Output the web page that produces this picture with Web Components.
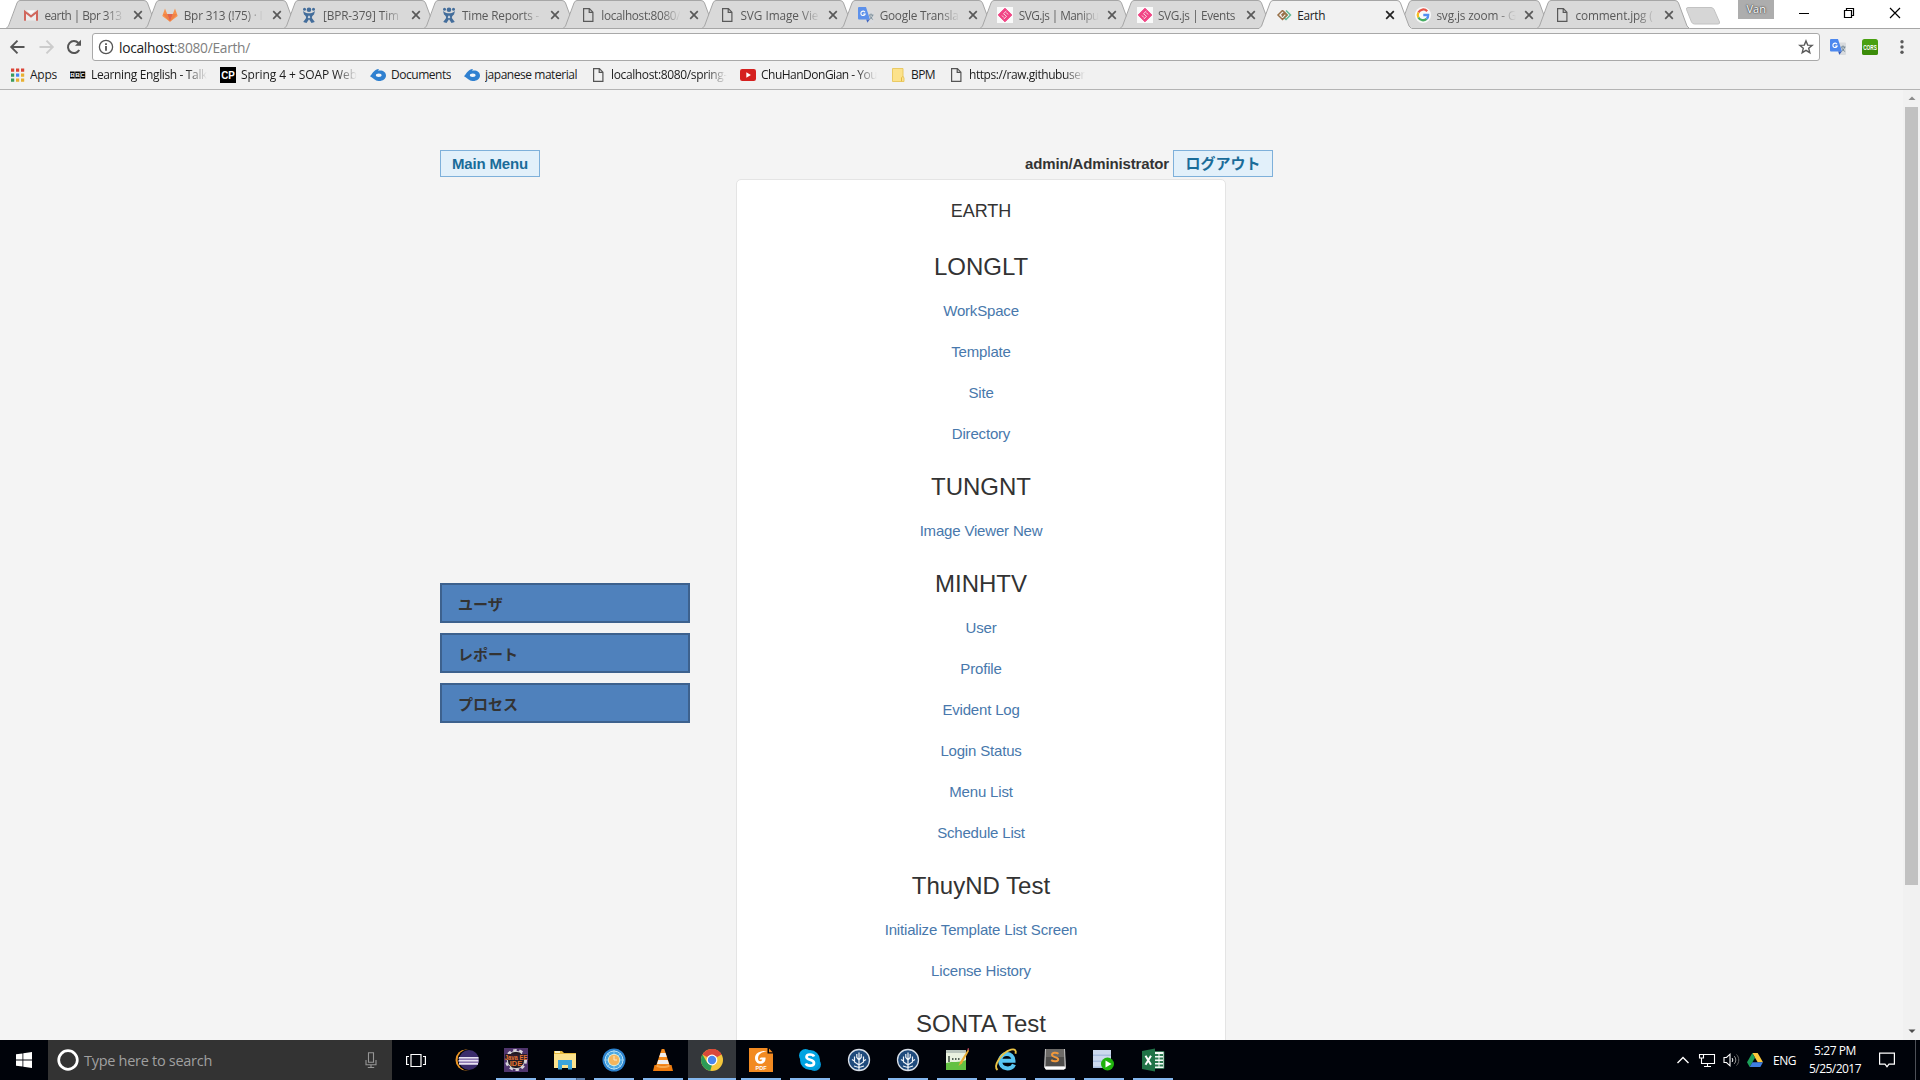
<!DOCTYPE html>
<html lang="en">
<head>
<meta charset="utf-8">
<title>Earth</title>
<style>
html,body{margin:0;height:100%;overflow:hidden}
body{font-family:"Open Sans","Noto Sans","Noto Sans CJK JP",sans-serif}
</style>
</head>
<body>
<desktop-screen></desktop-screen>
<script>
const ICONS = {
gmail:'<path d="M1 3.500h14v10H1z" fill="#f0efef"/><path d="M2 13.700V4.700l6 4.700 6-4.700v9" fill="none" stroke="#d0584d" stroke-width="2"/><path d="M3 3.500l5 4 5-4" fill="#fff" stroke="#dcdcdc" stroke-width=".6"/>',
gitlab:'<path d="M8 14.8L.3 9 3 1.5 5.2 7h5.6L13 1.5 15.7 9z" fill="#fc8a3a"/><path d="M8 14.8L5.2 7h5.6z" fill="#e2553a"/><path d="M8 14.8L.8 7h4.4zM8 14.8L15.2 7h-4.4z" fill="#f47534"/>',
jira:'<g fill="#2f5f93"><circle cx="8" cy="2.800" r="2.300"/><circle cx="3.500" cy="2.300" r="1.500"/><circle cx="12.500" cy="2.300" r="1.500"/><path d="M2 4C4.500 6 6.300 6.300 8 6.300s3.500-.3 6-2.300l-1 3.500c-1.200 1-2.300 2-2.100 3.400l2.900 4-3.300 1L8 12.300 5.500 15.900l-3.300-1 2.900-4C5.300 9.500 4.200 8.500 3 7.500z"/></g><path d="M8 8.300l1.300 1.900L8 11.600l-1.300-1.400z" fill="#dbe3ea"/>',
page:'<path d="M3.600 1.600h5.800l3.500 3.600v9.200H3.600zM9.200 1.600v3.800h3.700" fill="none" stroke="currentColor" stroke-width="1.200"/>',
gtrans:'<path d="M6 3.500h9a1 1 0 0 1 1 1V15a1 1 0 0 1-1 1H9z" fill="#d9dbde"/><path d="M1 0h7l4 12.500H1a1 1 0 0 1-1-1V1a1 1 0 0 1 1-1z" fill="#4d88ee"/><path d="M8.200 12.500h3.500L9.400 15.800z" fill="#3059bd"/><path d="M11 8h4.500M13 6.500V8M14.600 8c-.5 2.500-2 4-3.200 4.700M11.700 8.500c.7 2 2 3.300 3.400 4" stroke="#6b8190" fill="none" stroke-width=".9"/><path d="M7 5.200A2.200 2.200 0 1 0 7.200 7H5.200" stroke="#fff" fill="none" stroke-width="1.100"/>',
svgjs:'<path d="M0 0h16v16H0z" fill="#fff"/><path d="M8 1.200L14.800 8 8 14.800 1.200 8z" fill="#f53079" stroke="#f53079"/><path d="M9.300 4L6.500 6.700l3 2.600-2.700 2.800M5 8.500l1.800 2M9.300 5.500l1.700 2" stroke="#fff" fill="none" stroke-width=".8"/>',
earth:'<g fill="none" stroke-width="1.500"><path d="M10 3.500L14.500 8 10 12.500l-2-1.800" stroke="#62b996"/><path d="M8.500 5.500L11 8l-2.500 2.500" stroke="#7abf73"/><path d="M6.500 3.500L2 8l4.500 4.500L11 8 9 6 6 9.500M6.500 3.500l2 1.800-3 3" stroke="#987047"/></g>',
google:'<circle cx="8" cy="8" r="8" fill="#fff"/><g fill="none" stroke-width="2.300"><path d="M12.200 4.300A5.300 5.300 0 0 0 3.400 5.500" stroke="#ea4335"/><path d="M3.400 5.500a5.300 5.300 0 0 0 0 5" stroke="#fbbc05"/><path d="M3.400 10.500a5.300 5.300 0 0 0 8.200 1.400" stroke="#34a853"/><path d="M11.600 11.900A5 5 0 0 0 13.200 8H8.300" stroke="#4285f4"/></g>',
close:'<path d="M4.200 4.200l7.600 7.600M11.800 4.200l-7.600 7.600" stroke="currentColor" stroke-width="1.700"/>',
back:'<path d="M15.500 8H2.500M8.500 1.700L2.200 8l6.300 6.300" fill="none" stroke="currentColor" stroke-width="1.900"/>',
fwd:'<path d="M.5 8h13M7.500 1.700L13.800 8l-6.300 6.300" fill="none" stroke="currentColor" stroke-width="1.900"/>',
reload:'<path d="M13.200 11A6 6 0 1 1 12.400 4" fill="none" stroke="currentColor" stroke-width="2"/><path d="M15 .8v6H9z" fill="currentColor"/>',
info:'<circle cx="8" cy="8" r="6.600" fill="none" stroke="#555" stroke-width="1.300"/><path d="M7.100 7h1.800v4.800H7.100zM7.100 4.200h1.800V6H7.100z" fill="#555"/>',
star:'<path d="M8 1.900l1.700 4.200 4.500.3-3.500 2.900 1.100 4.400L8 11.300l-3.800 2.400 1.100-4.400L1.800 6.400l4.500-.3z" fill="none" stroke="#5a5a5a" stroke-width="1.400"/>',
cors:'<rect width="16" height="16" rx="2.500" fill="#49a010"/><rect y="8" width="16" height="8" rx="2" fill="#3b8c09"/><text transform="translate(8 10.800) scale(.63 1)" font-size="7.500" font-weight="700" text-anchor="middle" fill="#fff" font-family="Liberation Sans">CORS</text>',
dots:'<g fill="#5a5a5a"><circle cx="8" cy="2.800" r="1.700"/><circle cx="8" cy="8" r="1.700"/><circle cx="8" cy="13.200" r="1.700"/></g>',
apps:'<path d="M2 1.500h3.200v3.200H2zM7 1.500h3.200v3.200H7zM12 1.500h3.200v3.200H12z" fill="#db4437"/><path d="M2 6.500h3.200v3.200H2zM2 11.500h3.200v3.200H2z" fill="#3a9b5c"/><path d="M7 6.500h3.200v3.200H7z" fill="#4285f4"/><path d="M12 6.500h3.200v3.200H12zM7 11.500h3.200v3.200H7zM12 11.500h3.200v3.200H12z" fill="#e8b031"/>',
bbc:'<path d="M0 4.500h4.700v7H0zM5.200 4.500h4.700v7H5.200zM10.400 4.500h4.800v7h-4.800z" fill="#000"/><g font-size="6" font-weight="700" fill="#fff" font-family="Liberation Sans"><text x="0.300" y="10.200">B</text><text x="5.500" y="10.200">B</text><text x="10.600" y="10.200">C</text></g>',
cp:'<path d="M0 0h16v16H0z"/><text transform="translate(8 12) scale(.85 1)" font-size="11.500" font-weight="700" text-anchor="middle" fill="#fff" font-family="Liberation Sans">CP</text>',
docs:'<path d="M0 9.200C2.500 7 3.500 2.500 9 2L8 3.700C12.500 2.800 16 5 16 8.500s-3.500 5.800-7.500 5.500C5 13.700 3.500 11 0 9.200z" fill="#2f80d0"/><ellipse cx="8.800" cy="8.300" rx="2.900" ry="1.700" fill="#f3f6fa"/>',
youtube:'<rect y="2" width="16" height="12" rx="2.200" fill="#d5201f"/><path d="M6.300 5.200l4.600 2.800-4.600 2.800z" fill="#fff"/>',
folder:'<path d="M2.500 1.500h10.500v8.500l1 .6v3.900H2.500z" fill="#fce28b" stroke="#e9c659" stroke-width=".9"/><path d="M11.500 14.300v-3.500l1.500-1.500" fill="none" stroke="#e3ba44"/>',
win:'<path d="M0 2.300L6.500 1.400v6.200H0zM7.300 1.300L16 0v7.600H7.300zM0 8.400h6.500v6.200L0 13.700zM7.300 8.400H16V16l-8.700-1.300z" fill="#fff"/>',
cortana:'<circle cx="11" cy="11" r="9.300" fill="none" stroke="#fff" stroke-width="2.700"/>',
mic:'<path d="M5.500.8h5v9.400h-5zM3 8v4.700h10V8M8 12.700V15.500M4.800 15.500h6.400" fill="none" stroke="#969696" stroke-width="1.100"/>',
taskview:'<path d="M5 1.500h10v12H5zM3 3.500H.6v8H3M17 3.500h2.400v8H17" fill="none" stroke="#fff" stroke-width="1.200"/>',
eclipse:'<circle cx="11" cy="12" r="10.500" fill="#ec9625"/><circle cx="13" cy="12" r="10.500" fill="#00030a"/><circle cx="14" cy="12" r="10" fill="#3b2c6c"/><path d="M4 9h19.500v1.800H3.500zM3.500 12h20v1.800h-20zM4 15h19v1.800H4z" fill="#e8e1f2"/><path d="M4 10.800h19.500V12H4zM4 13.800h19.500V15H4z" fill="#8e79b3"/>',
javaee:'<path d="M0 0h24v24H0z" fill="#4f356d"/><circle cx="12" cy="12" r="9.800" fill="none" stroke="#d8d4dc" stroke-width="2.500" stroke-dasharray="3.500 2.650"/><circle cx="12" cy="12" r="8.700" fill="#211b22" stroke="#ddd"/><path d="M1 6h22v6H1z" fill="#2a1d2a"/><text transform="translate(12 11.600) scale(.76 1)" font-size="7.800" font-weight="700" text-anchor="middle" fill="#e67632" font-family="Liberation Sans">Java EE</text><text x="12" y="18.300" font-size="7.500" font-weight="700" text-anchor="middle" fill="#e67632" font-family="Liberation Sans">IDE</text>',
explorer:'<path d="M1 3h8l2 2h12v4H1z" fill="#e5b93e"/><path d="M2 3h5v2H2z" fill="#f9f0c1"/><path d="M1 6h22v14H1z" fill="#fbe28d"/><path d="M5 12h14v9.500h-4V17H9v4.500H5z" fill="#3ba4dc"/>',
clock:'<circle cx="12" cy="12" r="11.500" fill="#2c82cd"/><circle cx="12" cy="12" r="9" fill="#4aa7e3" stroke="#b8e2f7"/><path d="M12 2v20M2 12h20M5 5l14 14M19 5L5 19" stroke="#9fd6f3" stroke-width=".8"/><circle cx="12" cy="12" r="5.700" fill="#f4b55d" stroke="#dbecd8"/><path d="M12 8v4h3" fill="none" stroke="#fbe9c8" stroke-width="1"/>',
vlc:'<path d="M10.700 1h2.600l6 18H4.700z" fill="#f58a1d"/><path d="M9.500 5h5l1.300 4H8.200zM7.300 12h9.400l1.300 4H6z" fill="#eee"/><path d="M3.500 17h17L22 23H2z" fill="#ee7c0f"/><path d="M6 16.500c3 2 9 2 12 0l.7 2c-3 2-10.400 2-13.400 0z" fill="#f8a74a"/>',
chrome:'<circle cx="12" cy="12" r="11" fill="#f3c63c"/><path d="M12 12L2.500 6.500A11 11 0 0 1 21.500 6.500z" fill="#d9483b"/><path d="M12 6.500h9.500A11 11 0 0 0 12 1z" fill="#d9483b"/><path d="M2.500 6.500L7.200 14.700 12 17l-1.800 5.900A11 11 0 0 1 2.500 6.500z" fill="#2c9b57"/><circle cx="12" cy="12" r="5.400" fill="#fff"/><circle cx="12" cy="12" r="4.200" fill="#4a86ec"/>',
foxit:'<path d="M0 0h18.500v5.500H24V24H0z" fill="#f28a21"/><path d="M20 .5v3.700h3.700z" fill="#f28a21"/><path d="M18 3C11 2.500 6 5 6 10c0 3.500 2.500 5.800 5.500 5.800 3.700 0 5.500-2.800 5-6.300h-4.300c-1 .2-1.600 1-1.700 2h2.800c-.3 1.200-1 1.700-2 1.700-1.500 0-2.300-1.200-2.300-3C9 6.500 13 4 18 3z" fill="#fff"/><text x="12" y="22.300" font-size="5.500" font-weight="700" text-anchor="middle" fill="#fff" font-family="Liberation Sans">PDF</text>',
skype:'<circle cx="7.500" cy="7.500" r="6.500" fill="#00a5e3"/><circle cx="16.500" cy="16.500" r="6.500" fill="#0096d6"/><circle cx="12" cy="12" r="10" fill="#00a3e1"/><path d="M16 8.500C15 6 8.500 5.500 8.500 9c0 3.500 7.500 2 7.500 6 0 3.500-7 3.500-8.200.5" fill="none" stroke="#fff" stroke-width="2.700"/>',
sourcetree:'<circle cx="12" cy="12" r="10.500" fill="#1e4a7c" stroke="#d8dfe8" stroke-width="1.300"/><g fill="none" stroke="#eef3f8" stroke-width="1.200"><path d="M12 22V4.500M12 17l-4.500-3V8.500M12 17l4.500-3V8.500M12 12L9.800 9.500V6M12 12l2.200-2.500V6M7.500 13L5 11.500M16.500 13l2.500-1.500M12 19.500L7 18M12 19.500l5-1.500"/></g>',
npp:'<path d="M1 2h20v20H1z" fill="#e9f2e0"/><path d="M1 2h20v3H1z" fill="#bac6bd"/><path d="M1 15c7-2 13 0 20-3v10H1z" fill="#63c143"/><path d="M4 8v6" stroke="#24342a" stroke-width="1.300"/><path d="M7 11h1.500M10 11h1.500M13 11h1.500" stroke="#24342a" stroke-width="1.500"/><path d="M23.500.5L15 14l-1.500 4 3.500-2.500L24 3z" fill="#e7ad35"/><path d="M22 1l2-1v3z" fill="#b13f54"/>',
ie:'<path d="M20 16.500C18 22 6.500 22.500 6 12.500 6.500 4 19.500 3.500 19.500 12.800H8" fill="none" stroke="#58c5f1" stroke-width="4"/><path d="M3.500 22C-1 18 7 5 17 1.700c4-1.200 5.500 1 4.500 4" fill="none" stroke="#eac345" stroke-width="1.900"/>',
sublime:'<path d="M2 1h20l1 18-2 3H3l-2-3z" fill="#bdbdbd"/><path d="M3 1h18l.5 17h-19z" fill="#4e4d4b"/><path d="M3 1h18v8H3z" fill="#6c6a67"/><path d="M1.500 19h21v2H2.500z" fill="#fff"/><path d="M15.500 5.800C13 4 8.700 4.500 9 7.200c.3 2.300 6 1.500 6.200 4 .2 2.700-4.700 2.700-7 .9" fill="none" stroke="#f0983b" stroke-width="2"/>',
db:'<path d="M1 2h18v18H1z" fill="#a9bedf"/><path d="M1 2h18v4.500H1zM1 8h18v4.500H1zM1 14h18v4.500H1z" fill="#ccd9ee"/><circle cx="15.500" cy="16" r="6.500" fill="#1fb30d"/><path d="M13.500 12.500l6 3.500-6 3.500z" fill="#fff"/>',
excel:'<path d="M12 3.500h11v17H12z" fill="#f5faf6" stroke="#24714a" stroke-width=".8"/><path d="M14 6h3.500v2H14zM18.500 6H22v2h-3.500zM14 9.500h3.500v2H14zM18.500 9.500H22v2h-3.500zM14 13h3.500v2H14zM18.500 13H22v2h-3.500zM14 16.500h3.500v2H14zM18.500 16.500H22v2h-3.500z" fill="#2c7b52"/><path d="M1 3l13-2.500v23L1 21z" fill="#207347"/><path d="M4.500 7.700l5.500 9M10 7.700l-5.500 9" stroke="#fff" stroke-width="2"/>',
caret:'<path d="M2.500 11L8 5.500l5.500 5.500" fill="none" stroke="#fff" stroke-width="1.400"/>',
net:'<path d="M4.500 2.500h11v9H2.500V7M5 14.500h7M8.500 11.500v3M.5 2.500h4V6h-4zM2.500 6v2" fill="none" stroke="#fff" stroke-width="1.100"/>',
vol:'<path d="M1 5.500h2.500L7 2.200v11.600L3.500 10.500H1z" fill="none" stroke="#fff" stroke-width="1.100"/><path d="M9 6c1 1 1 3 0 4" fill="none" stroke="#fff"/><path d="M11.300 4.200c2 2 2 5.600 0 7.600" fill="none" stroke="#999"/><path d="M13.500 2.500c3 3 3 8 0 11" fill="none" stroke="#666"/>',
drive:'<path d="M5.300 1h5.400L16 10.300h-5.300z" fill="#fbc93d"/><path d="M5.300 1L8 5.700 2.700 15 0 10.300z" fill="#1c9f59"/><path d="M5.400 10.300H16L13.300 15H2.700z" fill="#3f7de0"/>',
note:'<path d="M.6 1.200h14.800v11H10l-2 2.500-2-2.500H.6z" fill="none" stroke="#fff" stroke-width="1.200"/>',
min:'<path d="M3 8.500h10" stroke="#000"/>',
restore:'<path d="M3.500 5.500h7v7h-7zM5.500 5.500v-2h7v7h-2" fill="none" stroke="#000" stroke-width="1.200"/>',
wclose:'<path d="M3 3l10 10M13 3L3 13" stroke="#000" stroke-width="1.200"/>',
up:'<path d="M4.500 10L8 6.500l3.500 3.500z" fill="#8b8b8b"/>',
down:'<path d="M4.500 6.500L8 10l3.500-3.500z" fill="#4d4d4d"/>'
};
const BOX = {cortana:'0 0 22 22', taskview:'0 0 20 15'};
for (const n of ['eclipse','javaee','explorer','clock','vlc','chrome','foxit','skype','sourcetree','npp','ie','sublime','db','excel']) BOX[n] = '0 0 24 24';

function define(name, html, init) {
  customElements.define(name, class extends HTMLElement {
    connectedCallback() {
      if (this.shadowRoot) return;
      const root = this.attachShadow({mode: 'open'});
      root.innerHTML = typeof html === 'function' ? html(this) : html;
      if (init) init(this, root);
    }
  });
}

define('app-icon', el => {
  const n = el.getAttribute('name'), box = BOX[n] || '0 0 16 16';
  const [, , w, h] = box.split(' ');
  return `<style>:host{display:block;flex:none;width:${w}px;height:${h}px}svg{display:block;overflow:visible}</style>
  <svg width="${w}" height="${h}" viewBox="${box}">${ICONS[n]}</svg>`;
});

// Text set to a given width by spreading the difference over its letters.
define('fit-text', '<style>:host{display:block;white-space:pre}span{display:inline-block}</style><span><slot></slot></span>', (el, root) => {
  const w = +el.getAttribute('w'), s = root.querySelector('span');
  if (!w) return;
  const d = (w - s.getBoundingClientRect().width) / el.textContent.length;
  s.style.letterSpacing = d.toFixed(3) + 'px';
});

define('browser-tab', el => {
  const on = el.hasAttribute('active');
  return `<style>
  :host{display:grid;flex:none;width:139.2px;height:29px;position:relative;z-index:${on ? 2 : 1};color:${on ? '#222' : '#484848'}}
  :host>*{grid-area:1/1}
  svg{width:153px;height:29px;display:block}
  .row{display:flex;align-items:center;padding:2px 0 0 17px;height:25px;opacity:${on ? 1 : .88}}
  .label{width:80px;margin-left:5.500px;overflow:hidden;font-size:11.800px;line-height:20px;${el.hasAttribute('fade') ? '-webkit-mask-image:linear-gradient(90deg,#000 76%,transparent)' : ''}}
  .x{margin-left:5px;margin-top:1px}
  </style>
  <svg viewBox="0 0 153 29"><path d="M0 28.500L3 26 11 3Q12 .5 14 .5H138Q140.500 .5 141.500 3L150 26 153 28.500V29H0z" fill="${on ? '#f1f1f1' : '#d9d9d9'}"/><path d="M0 28.500L2.500 26 11 3Q12 .5 14 .5H138Q140.500 .5 141.500 3L150 26 152.500 28.500${on ? '' : 'H0'}" fill="none" stroke="#a6a6a6"/></svg>
  <div class="row"><app-icon name="${el.getAttribute('icon')}"></app-icon><div class="label"><fit-text w="${el.getAttribute('w')}">${el.textContent}</fit-text></div><app-icon class="x" name="close"></app-icon></div>`;
});

define('tab-strip', `<style>
:host{display:flex;height:29px;background:linear-gradient(#fff 28px,#a6a6a6 28px);padding-left:6px;box-sizing:border-box}
.new{display:block;flex:none;margin:6px 0 0 9px}
.user{margin-left:17px;width:36px;height:19px;background:#adadad;color:#fff;font-size:11px;line-height:17px;text-align:center;text-shadow:0 0 2px #333,0 0 1px #333}
.b{margin-top:5px}
</style>
<browser-tab icon="gmail" w="77" fade>earth | Bpr 313</browser-tab>
<browser-tab icon="gitlab" w="79" fade>Bpr 313 (!75) · I</browser-tab>
<browser-tab icon="jira" w="76" fade>[BPR-379] Tim</browser-tab>
<browser-tab icon="jira" w="77" fade>Time Reports -</browser-tab>
<browser-tab icon="page" w="79" fade>localhost:8080/</browser-tab>
<browser-tab icon="page" w="78" fade>SVG Image Vie</browser-tab>
<browser-tab icon="gtrans" w="79" fade>Google Transla</browser-tab>
<browser-tab icon="svgjs" w="80" fade>SVG.js | Manipu</browser-tab>
<browser-tab icon="svgjs" w="77">SVG.js | Events</browser-tab>
<browser-tab icon="earth" w="28" active>Earth</browser-tab>
<browser-tab icon="google" w="80" fade>svg.js zoom - G</browser-tab>
<browser-tab icon="page" w="77" fade>comment.jpg (</browser-tab>
<svg class="new" width="36" height="19"><path d="M3 1.500H26Q28 1.500 29 3.500L34.500 16Q35 18 33 18H9.500Q7.500 18 6.500 16L1.500 3.500Q1 1.500 3 1.500z" fill="#d6d6d6" stroke="#c2c2c2"/></svg>
<div class="user">Van</div>
<app-icon class="b" name="min" style="margin-left:22px"></app-icon>
<app-icon class="b" name="restore" style="margin-left:29px"></app-icon>
<app-icon class="b" name="wclose" style="margin-left:30px"></app-icon>`);

define('tool-bar', `<style>
:host{display:flex;align-items:center;height:36px;padding:0;background:#f1f1f1;color:#555}
.omni{display:flex;align-items:center;box-sizing:border-box;width:1728px;height:28px;margin-left:10px;border:1px solid #a9a9a9;border-radius:3px;background:#fff;padding:0 5px}
.url{display:flex;font-size:13.800px;color:#808080;margin-left:5px}
.url b{font-weight:400;color:#222}
.grow{flex:1}
</style>
<app-icon name="back" style="margin-left:9px"></app-icon>
<app-icon name="fwd" style="margin-left:14px;color:#ccc"></app-icon>
<app-icon name="reload" style="margin-left:11px"></app-icon>
<div class="omni"><app-icon name="info"></app-icon><fit-text class="url" w="131"><b>localhost</b>:8080/Earth/</fit-text><div class="grow"></div><app-icon name="star"></app-icon></div>
<app-icon name="gtrans" style="margin-left:10px"></app-icon>
<app-icon name="cors" style="margin-left:16px"></app-icon>
<app-icon name="dots" style="margin-left:16px"></app-icon>`);

define('book-mark', el => `<style>
:host{display:flex;align-items:center;flex:none;gap:5px;height:20px;color:#1c1c1c}
app-icon{color:#555}
div{width:${el.getAttribute('w')}px;overflow:hidden;font-size:12px;line-height:20px;white-space:nowrap;${el.hasAttribute('fade') ? '-webkit-mask-image:linear-gradient(90deg,#000 82%,transparent)' : ''}}
</style><app-icon name="${el.getAttribute('icon')}"></app-icon><div><fit-text w="${el.getAttribute('w')}">${el.textContent}</fit-text></div>`);

define('bookmark-bar', `<style>:host{display:flex;gap:13px;box-sizing:border-box;height:25px;padding-left:9px;background:#f1f1f1;border-bottom:1px solid #b4b4b4}</style>
<book-mark icon="apps" w="27">Apps</book-mark>
<book-mark icon="bbc" w="116" fade>Learning English - Talk</book-mark>
<book-mark icon="cp" w="116" fade>Spring 4 + SOAP Web</book-mark>
<book-mark icon="docs" w="60">Documents</book-mark>
<book-mark icon="docs" w="92">japanese material</book-mark>
<book-mark icon="page" w="116" fade>localhost:8080/spring-</book-mark>
<book-mark icon="youtube" w="116" fade>ChuHanDonGian - You</book-mark>
<book-mark icon="folder" w="24">BPM</book-mark>
<book-mark icon="page" w="116" fade>https://raw.githubuser</book-mark>`);

define('action-button', `<style>:host{display:flex;justify-content:center;box-sizing:border-box;width:100px;height:27px;border:1px solid #7eb0da;background:#e2f0fa;color:#1a6c99;font-weight:700;font-size:15px;line-height:26px}</style><slot></slot>`);

define('side-item', `<style>:host{display:block;box-sizing:border-box;width:250px;height:40px;border:2px solid #3d618d;background:#4f81bc;color:#333;font-weight:700;font-size:15px;line-height:39px;padding-left:16px}</style><slot></slot>`);

define('link-group', el => `<style>
:host{display:block;text-align:center}
h3{margin:0;padding-top:9px;font-size:24px;font-weight:400;line-height:47px;height:47px;color:#333}
a{display:block;font-size:15px;line-height:41px;height:41px;color:#4878ac;letter-spacing:-.18px}
</style><h3>${el.getAttribute('title-text')}</h3>${(el.getAttribute('links') || '').split('|').filter(Boolean).map(t => `<a>${t}</a>`).join('')}`);

define('earth-page', `<style>
:host{display:flex;height:950px;overflow:hidden;background:#f4f4f4;font-family:"Liberation Sans","Noto Sans CJK JP",sans-serif;color:#333}
.main{flex:1;padding:60px 0 0 440px}
.top{display:flex;width:833px;height:27px;align-items:center;margin-bottom:2px}
.name{margin-left:auto;font-weight:700;font-size:15px;margin-right:4px}
.cols{display:flex}
.side{display:flex;flex-direction:column;gap:10px;width:296px;padding-top:404px}
.card{box-sizing:border-box;width:490px;height:1100px;border:1px solid #e4e4e4;border-radius:5px;background:#fff}
.card h4{margin:0;height:54px;padding-top:11px;font-size:18px;line-height:40px;box-sizing:border-box;font-weight:400;text-align:center}
.bar{display:flex;flex-direction:column;align-items:center;width:17px;background:#f1f1f1}
.thumb{width:13px;height:778px;background:#c1c1c1}
.bar app-icon{height:17px}
.sp{flex:1}
</style>
<div class="main">
<div class="top"><action-button><fit-text w="76">Main Menu</fit-text></action-button><fit-text class="name" w="144">admin/Administrator</fit-text><action-button><fit-text w="75">ログアウト</fit-text></action-button></div>
<div class="cols">
<div class="side"><side-item>ユーザ</side-item><side-item>レポート</side-item><side-item>プロセス</side-item></div>
<div class="card"><h4>EARTH</h4>
<link-group title-text="LONGLT" links="WorkSpace|Template|Site|Directory"></link-group>
<link-group title-text="TUNGNT" links="Image Viewer New"></link-group>
<link-group title-text="MINHTV" links="User|Profile|Evident Log|Login Status|Menu List|Schedule List"></link-group>
<link-group title-text="ThuyND Test" links="Initialize Template List Screen|License History"></link-group>
<link-group title-text="SONTA Test"></link-group>
</div></div></div>
<div class="bar"><app-icon name="up"></app-icon><div class="thumb"></div><div class="sp"></div><app-icon name="down"></app-icon></div>`);

define('task-item', el => `<style>
:host{display:flex;flex-direction:column;align-items:center;flex:none;width:49px;height:40px}
.i{display:flex;justify-content:center;align-items:center;width:48px;height:38px;padding-top:2px;box-sizing:border-box}
.u{width:40px;height:2px}
:host([run]) .u{background:#84b7ee}
:host([many]) .u{background:linear-gradient(90deg,#84b7ee 31px,#2c4766 31px,#587ca8 32px)}
:host([on]) .i{background:#34373b}:host([on]) .u{width:48px;background:#84b7ee}
</style><div class="i"><app-icon name="${el.getAttribute('icon')}"></app-icon></div><div class="u"></div>`);

define('task-bar', `<style>
:host{display:flex;align-items:center;height:40px;background:#00030a;color:#fff}
.search{display:flex;align-items:center;width:344px;height:40px;margin-left:16px;background:#333;color:#a0a0a0;font-size:14.500px}
.clock{display:flex;flex-direction:column;align-items:center;width:54px;font-size:12px;line-height:18px}
.end{width:1px;height:40px;background:#4d5057;margin-left:20px;margin-right:4px}
.grow{flex:1}
</style>
<app-icon name="win" style="margin-left:16px"></app-icon>
<div class="search"><app-icon name="cortana" style="margin-left:9px"></app-icon><fit-text w="128" style="margin-left:5px">Type here to search</fit-text><div class="grow"></div><app-icon name="mic" style="margin-right:13px"></app-icon></div>
<app-icon name="taskview" style="margin:0 7px 0 14px"></app-icon>
<task-item icon="eclipse" style="margin-left:9px"></task-item><task-item icon="javaee" run></task-item><task-item icon="explorer" run many></task-item><task-item icon="clock" run></task-item><task-item icon="vlc" run></task-item><task-item icon="chrome" on></task-item><task-item icon="foxit" run></task-item><task-item icon="skype" run></task-item><task-item icon="sourcetree"></task-item><task-item icon="sourcetree" run></task-item><task-item icon="npp" run></task-item><task-item icon="ie" run></task-item><task-item icon="sublime" run></task-item><task-item icon="db" run></task-item><task-item icon="excel" run></task-item>
<div class="grow"></div>
<app-icon name="caret"></app-icon><app-icon name="net" style="margin-left:8px"></app-icon><app-icon name="vol" style="margin-left:8px"></app-icon><app-icon name="drive" style="margin-left:8px"></app-icon>
<fit-text w="23" style="margin-left:10px;font-size:12px">ENG</fit-text>
<div class="clock" style="margin-left:12px"><fit-text w="42">5:27 PM</fit-text><fit-text w="52">5/25/2017</fit-text></div>
<app-icon name="note" style="margin-left:17px"></app-icon><div class="end"></div>`);

define('desktop-screen', `<style>:host{display:flex;flex-direction:column;width:1920px;height:1080px;overflow:hidden}:host>*{flex:none}</style>
<tab-strip></tab-strip><tool-bar></tool-bar><bookmark-bar></bookmark-bar><earth-page></earth-page><task-bar></task-bar>`);
</script>
</body>
</html>
